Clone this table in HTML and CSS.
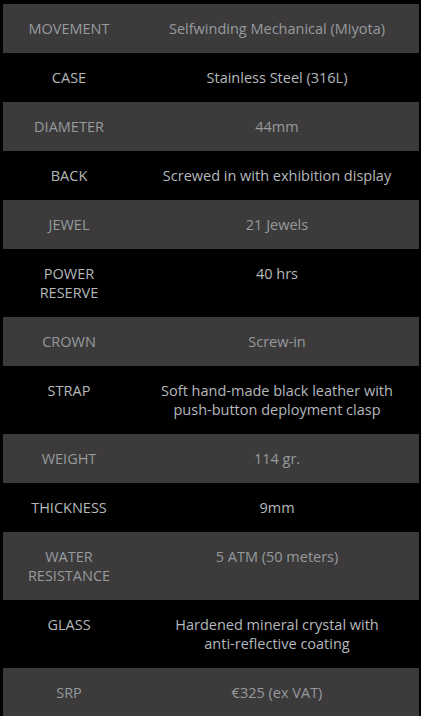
FILE: index.html
```html
<!DOCTYPE html>
<html>
<head>
<meta charset="utf-8">
<link rel="stylesheet" href="styles.css">
</head>
<body>
<table class="specs">
<tbody>
<tr class="odd"><td class="label">MOVEMENT</td><td class="value">Selfwinding Mechanical (Miyota)</td></tr>
<tr class="even"><td class="label">CASE</td><td class="value">Stainless Steel (316L)</td></tr>
<tr class="odd"><td class="label">DIAMETER</td><td class="value">44mm</td></tr>
<tr class="even"><td class="label">BACK</td><td class="value">Screwed in with exhibition display</td></tr>
<tr class="odd"><td class="label">JEWEL</td><td class="value">21 Jewels</td></tr>
<tr class="even"><td class="label">POWER<br>RESERVE</td><td class="value">40 hrs</td></tr>
<tr class="odd"><td class="label">CROWN</td><td class="value">Screw-in</td></tr>
<tr class="even"><td class="label">STRAP</td><td class="value">Soft hand-made black leather with<br>push-button deployment clasp</td></tr>
<tr class="odd"><td class="label">WEIGHT</td><td class="value">114 gr.</td></tr>
<tr class="even"><td class="label">THICKNESS</td><td class="value">9mm</td></tr>
<tr class="odd"><td class="label">WATER<br>RESISTANCE</td><td class="value">5 ATM (50 meters)</td></tr>
<tr class="even"><td class="label">GLASS</td><td class="value">Hardened mineral crystal with<br>anti-reflective coating</td></tr>
<tr class="odd"><td class="label">SRP</td><td class="value">€325 (ex VAT)</td></tr>
</tbody>
</table>
</body>
</html>
```
FILE: styles.css
```css
html, body {
  margin: 0;
  padding: 0;
  background: #000;
}
body {
  padding: 4px 2px 0 3px;
  font-family: "Open Sans", "DejaVu Sans", sans-serif;
  font-size: 14.5px;
  line-height: 19px;
}
.specs {
  width: 416px;
  border-collapse: collapse;
  border-spacing: 0;
}
.specs td {
  padding: 15px 2px;
  text-align: center;
  vertical-align: top;
}
.specs .label {
  width: 128px;
}
.odd {
  background: #3c3a3a;
  color: #959a9f;
}
.even {
  background: #000;
  color: #b4b8bc;
}
```
